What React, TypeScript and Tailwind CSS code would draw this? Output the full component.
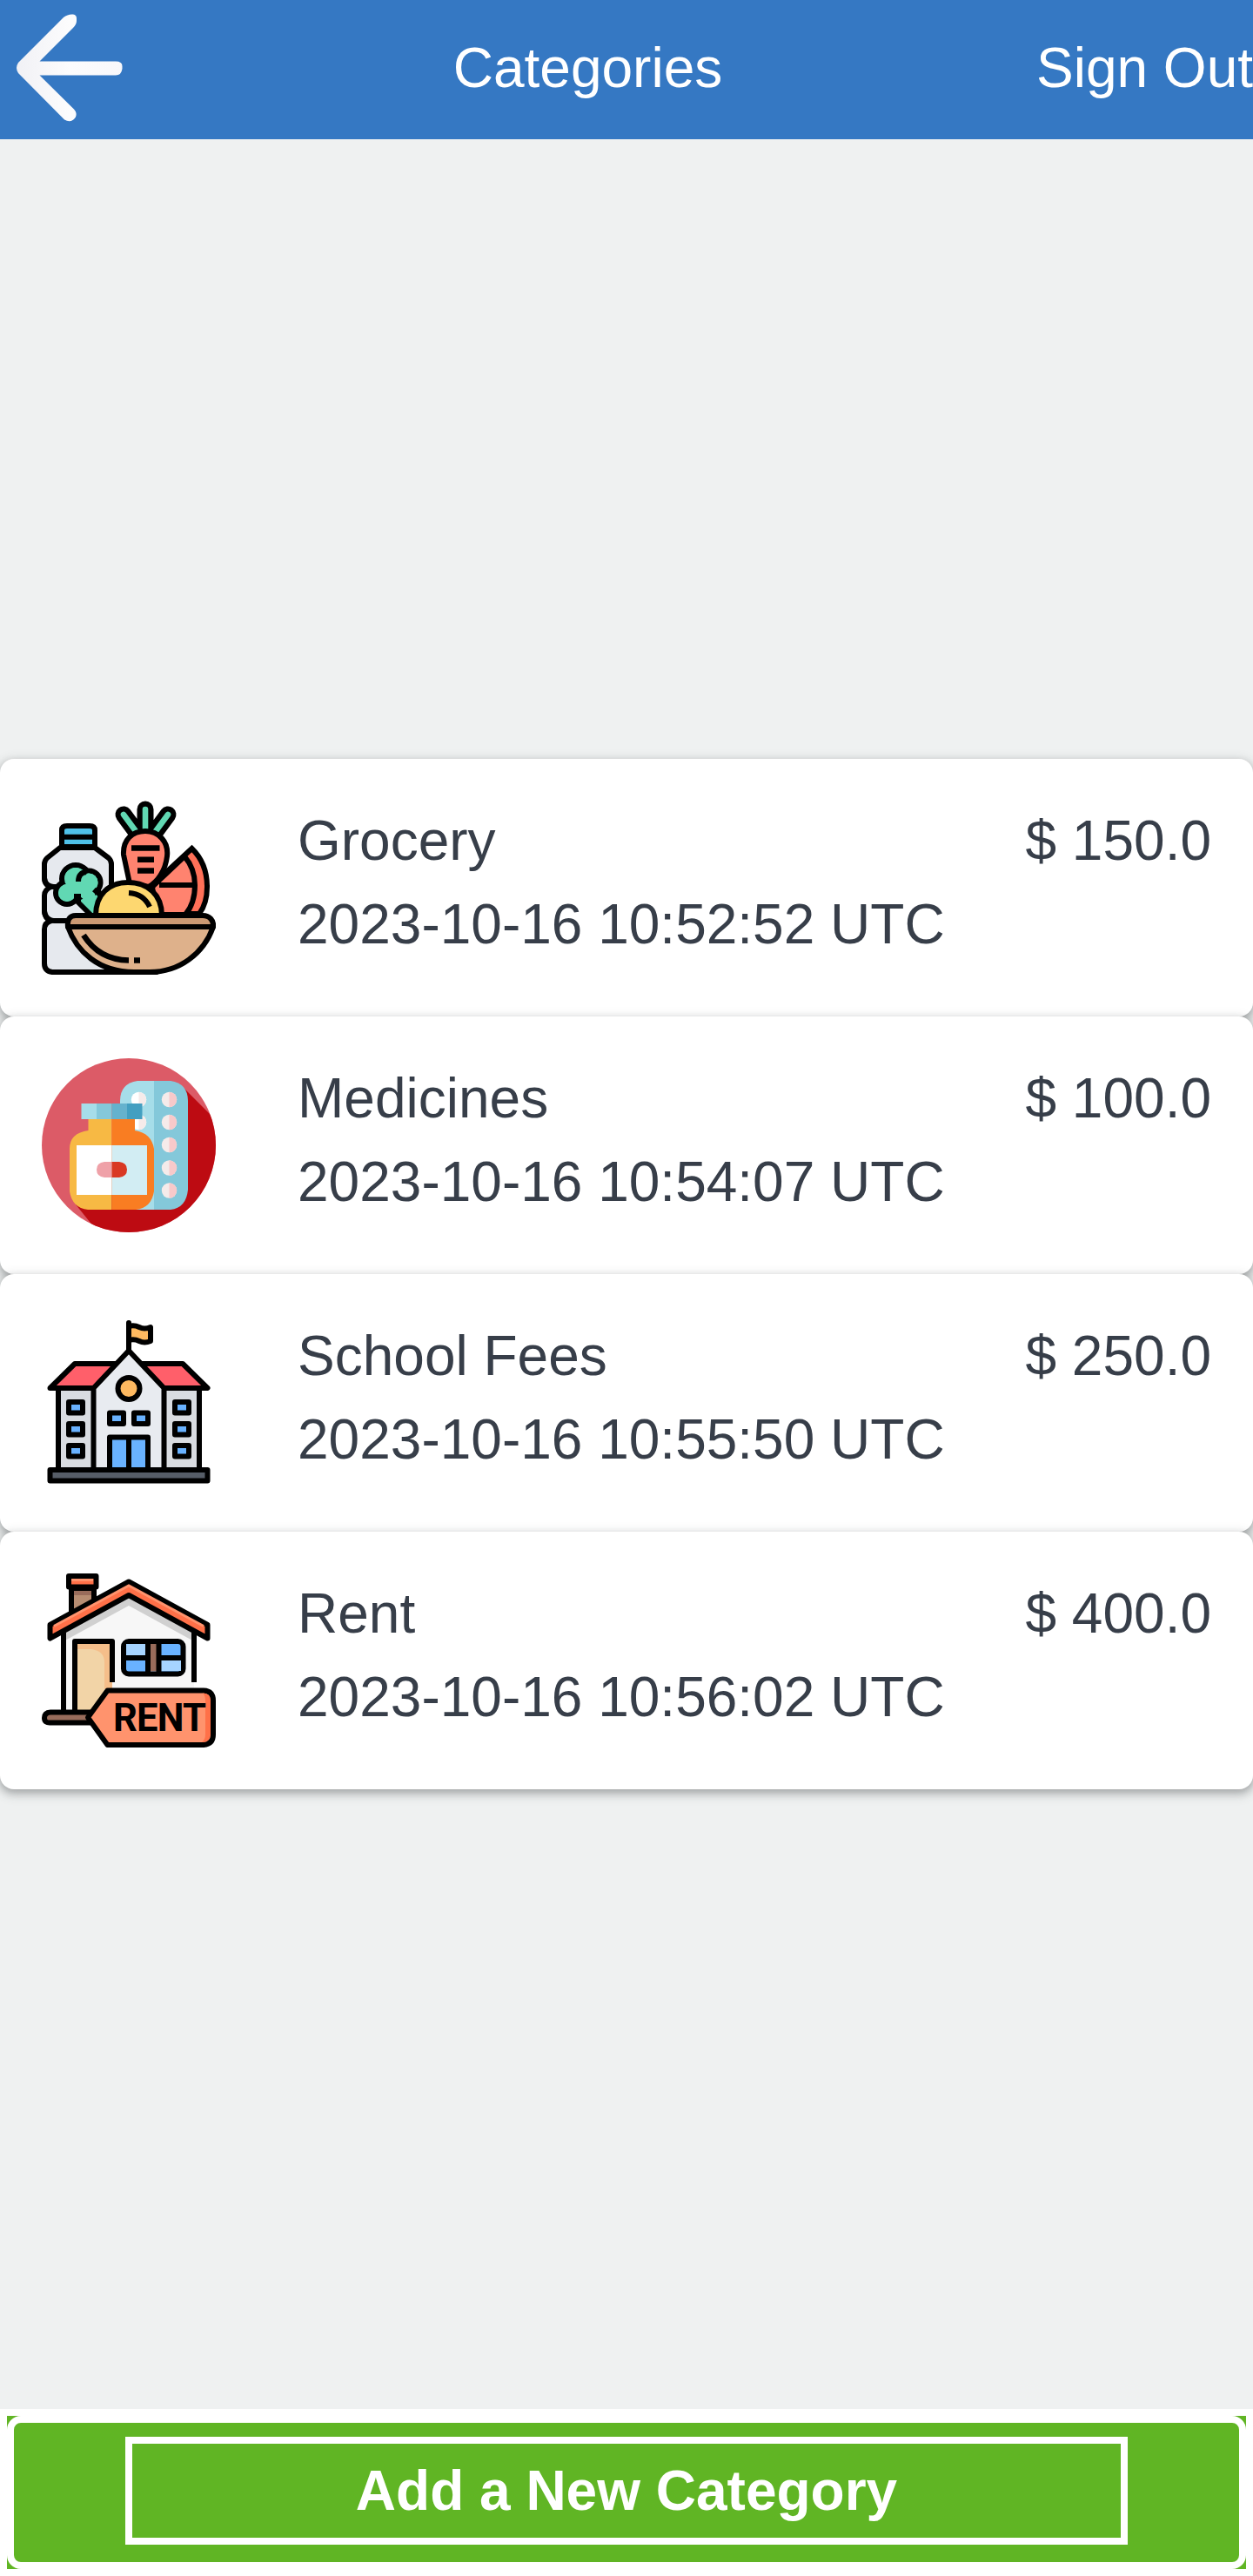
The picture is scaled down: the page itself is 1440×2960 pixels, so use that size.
import React from "react";

const K = "#000";

function BackArrow() {
  return (
    <svg viewBox="0 0 160 160" className="h-[160px] w-[160px] shrink-0">
      <defs>
        <linearGradient id="arrowShade" x1="0" y1="0" x2="1" y2="0">
          <stop offset="0" stopColor="#f1f1f5" />
          <stop offset="0.5" stopColor="#fcfcfd" />
          <stop offset="1" stopColor="#f8f8fb" />
        </linearGradient>
      </defs>
      <path
        d="M21 72L73 20Q78 16 84 16.500Q88 17 88 21V24Q88 28 84 32L45.500 70.500H133Q140.500 70.500 140.500 76V79Q139.500 86.500 133 86.500H45.500L85 125.500Q89 130 87 134.500Q82 142 74 137.500L21 84Q17 78 21 72Z"
        fill="url(#arrowShade)"
      />
    </svg>
  );
}

function GroceryIcon() {
  return (
    <svg viewBox="18 20 200 200" className="h-[200px] w-[200px]">
      <g stroke={K} strokeWidth="6" strokeLinejoin="round">
        <path d="M39 74L24 86Q21 89 21 93V109Q21 117 29 119Q21 122 21 129V147Q21 154 29 158Q21 160 21 168V207Q21 216 30 217H150L98 118V93Q98 89 95 86L79 74Z" fill="#e6e9ee" />
        <path d="M21 109Q22 119 32 119H50M21 147Q22 158 32 158H55" fill="none" />
        <path d="M41 73V54Q41 49 47 49H73Q79 49 79 54V73Z" fill="#4fc1e9" />
        <path d="M41 61.800H79" />
        <path d="M57 134L77 154H90V132L80 121Z" fill="#61d8b3" />
        <circle cx="57" cy="110" r="16" fill="#61d8b3" />
        <circle cx="47" cy="126" r="13" fill="#61d8b3" />
        <circle cx="72" cy="114" r="13.500" fill="#61d8b3" />
      </g>
      <circle cx="57" cy="110" r="13" fill="#61d8b3" />
      <circle cx="47" cy="126" r="10" fill="#61d8b3" />
      <circle cx="72" cy="114" r="10.500" fill="#61d8b3" />
      <path d="M50 118L66 116L78 122L80 132V145L62 130L52 130Z" fill="#61d8b3" />
      <path d="M60 113Q60 103 69 102M55 130H60V138M78 122L86 129" fill="none" stroke={K} strokeWidth="6" />
      <g stroke={K} strokeWidth="6">
        <path d="M145 117L190.500 75Q208 92 208 119Q208 138 199 150H150Z" fill="#ff7058" />
        <path d="M145 119L182 84Q194 98 194 117Q194 138 183 151H150Z" fill="#ff836f" />
        <path d="M153 117H194" />
      </g>
      <path d="M112 36L126 55M163 36L149 55M137 30V55" fill="none" stroke={K} strokeWidth="19" strokeLinecap="round" />
      <path d="M112 36L126 55M163 36L149 55M137 30V55" fill="none" stroke="#61d8b3" strokeWidth="6.600" strokeLinecap="round" />
      <path d="M119 115L112 82C111 65 122 55 137 55C152 55 164 67 162 84C160 101 151 113 141 119Z" fill="#ff836f" stroke={K} strokeWidth="6" />
      <path d="M121 74.500H153.500M128 87.800H147M128 100.500H147" fill="none" stroke={K} strokeWidth="6.500" />
      <path d="M80 152C80 128 95 114 117 114C140 114 156 128 156 152Z" fill="#fdd770" stroke={K} strokeWidth="6" />
      <path d="M118 126Q135 127 142 142" fill="none" stroke={K} strokeWidth="6" />
      <path d="M48 165C47 157 50 152 57 152H203C211 152 216 158 215 165Z" fill="#cb9973" stroke={K} strokeWidth="6" strokeLinejoin="round" />
      <path d="M48 165C58 193 83 217 124 217H142C176 217 204 196 215 165Z" fill="#deb18b" stroke={K} strokeWidth="6" strokeLinejoin="round" />
      <path d="M66 174.500Q84 203 118 203.500M124 203.500H131" fill="none" stroke={K} strokeWidth="6.500" />
    </svg>
  );
}

function MedicineIcon() {
  const rows = [68.5, 94.5, 120.5, 147, 173];
  return (
    <svg viewBox="18 21 200 200" className="h-[200px] w-[200px]">
      <clipPath id="disc"><circle cx="118" cy="121" r="100" /></clipPath>
      <g clipPath="url(#disc)">
        <path d="M18 21H218V221H18Z" fill="#dc5b67" />
        <path d="M182 56L230 104V240H98L57 189Z" fill="#bd0b12" />
      </g>
      <path d="M147 47H128Q108 50 108 70V195H147Z" fill="#a6dde9" />
      <path d="M147 47H166Q186 50 186 70V172Q184 193 166 195H147Z" fill="#84c8da" />
      {rows.map((y) => (
        <g key={y}>
          <circle cx="164.500" cy={y} r="8.700" fill="#f5ebea" />
          <path d={`M164.500 ${y - 8.7}a8.700 8.700 0 0 1 0 17.400Z`} fill="#f7c9ca" />
        </g>
      ))}
      {[68.5, 94.5].map((y) => (
        <g key={y}>
          <circle cx="129.500" cy={y} r="8.700" fill="#fff" />
          <path d={`M129.500 ${y - 8.7}a8.700 8.700 0 0 1 0 17.400Z`} fill="#f5ebea" />
        </g>
      ))}
      <path d="M71.500 90V104Q50 107 50 125V174Q53 193 71 195H98.500V90Z" fill="#f7b944" />
      <path d="M98.500 90H125V104Q144 107 147 125V174Q144 193 126 195H98.500Z" fill="#f97d22" />
      <path d="M63.500 73H81V91H63.500Z" fill="#a6dde9" />
      <path d="M81 73H98.500V91H81Z" fill="#84c8da" />
      <path d="M98.500 73H116V91H98.500Z" fill="#65b2cd" />
      <path d="M116 73H133.500V91H116Z" fill="#439fc1" />
      <path d="M58 121H98.500V178H58Z" fill="#fff" />
      <path d="M98.500 121H139V178H98.500Z" fill="#d2edf3" />
      <path d="M98.500 140H90Q81 141 81 149T90 158H98.500Z" fill="#efa1a8" />
      <path d="M98.500 140H107Q116 141 116 149T107 158H98.500Z" fill="#d93823" />
    </svg>
  );
}

function SchoolIcon() {
  return (
    <svg viewBox="18 18 200 200" className="h-[200px] w-[200px]">
      <g stroke={K} strokeWidth="6" strokeLinejoin="round" strokeLinecap="round">
        <path d="M37 101H199V195H37Z" fill="#d9dce1" />
        <path d="M27.500 101L56 73H180L208.500 101Z" fill="#ff5f6a" />
        <path d="M77.500 195V101L118 58L158.500 101V195Z" fill="#e8ebf0" />
        <path d="M118 58V26" />
        <path d="M118 30Q124 28 130 31T143 31V47Q136 50 130 47T118 46Z" fill="#feb960" />
        <circle cx="118" cy="101.500" r="12.500" fill="#feb960" />
        <path d="M96 195V157.500H140V195Z" fill="#69b2ff" />
        <path d="M118 158V195" />
        <path d="M27.500 195H208.500V207.500H27.500Z" fill="#565d67" />
        {[117, 142, 167].map((y) => (
          <g key={y} fill="#69b2ff">
            <rect x="49" y={y} width="16" height="12.500" />
            <rect x="171" y={y} width="16" height="12.500" />
          </g>
        ))}
        <rect x="96" y="129.500" width="16" height="12.500" fill="#69b2ff" />
        <rect x="124" y="129.500" width="16" height="12.500" fill="#69b2ff" />
      </g>
    </svg>
  );
}

function RentIcon() {
  return (
    <svg viewBox="18 18 200 200" className="h-[200px] w-[200px]">
      <path d="M43 90L118 43L193 90V160L150 180H43Z" fill="#f7f7f7" />
      <path d="M43 86L118 44L193 86V96L118 55L43 96Z" fill="#d0d0d0" />
      <path d="M52 36H78V64L52 79Z" fill="#b78d72" />
      <path d="M52 36H78V43H52Z" fill="#996c5b" />
      <path d="M52 79V35H78V62" fill="none" stroke={K} strokeWidth="6" />
      <path d="M49 21H80.500V33.500H49Z" fill="#ff7048" stroke={K} strokeWidth="6" strokeLinejoin="round" />
      <path d="M52 25.500H77" stroke="#ff936d" strokeWidth="3" />
      <path d="M43 177V86M193 86V143" stroke={K} strokeWidth="6" />
      <path d="M56 177V96H99V151H90V177Z" fill="#f5be8a" />
      <path d="M59 105H75Q90 107 90 120V177H59Z" fill="#f2d4a7" />
      <path d="M56 177V96H99V143" fill="none" stroke={K} strokeWidth="6" strokeLinejoin="round" />
      <path d="M83 177.500H28Q21 178 21 184T28 189.500H83" fill="#996c5b" stroke={K} strokeWidth="6" />
      <path d="M80 180.500H95V189.500H83V186.500H80Z" fill="#996c5b" />
      <path d="M83 177.500H90V180.500H83Z" fill="#996c5b" />
      <path d="M27.500 92.500V77L118 27.500L208.500 77V92.500L118 43Z" fill="#ff7048" stroke={K} strokeWidth="6" strokeLinejoin="round" />
      <path d="M32 78.500L118 32L204 78.500" fill="none" stroke="#ff936d" strokeWidth="3" />
      <rect x="112" y="96" width="68.500" height="37.500" rx="6" fill="#69b2ff" stroke={K} strokeWidth="6" />
      <path d="M115 99H137V113H115ZM155 115H178V130H155Z" fill="#a6d4ff" />
      <path d="M146 99V130.500" stroke="#996c5b" strokeWidth="8" />
      <path d="M140 96V133M152.500 96V133M113 115H143M150 115H180" stroke={K} strokeWidth="6" />
      <path d="M93.500 152.500H204Q215 153 215 164V203Q215 214 204 215H93.500L71 183.500Z" fill="#ff936d" stroke={K} strokeWidth="6" strokeLinejoin="round" />
      <path d="M203 155.500Q212 156 212 164V203Q211 212 202 212Q206 209 206 203V164Q206 158 203 155.500Z" fill="#ff7048" />
      <text
        x="100"
        y="199"
        textLength="107"
        lengthAdjust="spacing"
        className="font-['Roboto',sans-serif] text-[43.500px] font-bold"
        fill={K}
      >
        RENT
      </text>
    </svg>
  );
}

const categories = [
  { name: "Grocery", time: "2023-10-16 10:52:52 UTC", amount: "$ 150.0", Icon: GroceryIcon },
  { name: "Medicines", time: "2023-10-16 10:54:07 UTC", amount: "$ 100.0", Icon: MedicineIcon },
  { name: "School Fees", time: "2023-10-16 10:55:50 UTC", amount: "$ 250.0", Icon: SchoolIcon },
  { name: "Rent", time: "2023-10-16 10:56:02 UTC", amount: "$ 400.0", Icon: RentIcon },
];

export default function App() {
  return (
    <div className="flex h-[2960px] w-[1440px] flex-col overflow-hidden bg-[#eff1f1] font-['Liberation_Sans',Arial,sans-serif] text-[64px] text-[#373e49]">
      <header className="flex h-[160px] shrink-0 items-center justify-between bg-[#3578c3] text-white">
        <BackArrow />
        <h1 className="pb-1 leading-[72px]">Categories</h1>
        <a className="pb-1 leading-[72px]">Sign Out</a>
      </header>
      <main className="flex flex-1 flex-col justify-center">
        {categories.map(({ name, time, amount, Icon }) => (
          <article
            key={name}
            className="flex h-[296px] rounded-[16px] bg-white p-[48px] shadow-[0_4px_8px_0_rgba(60,64,67,0.3),0_4px_12px_4px_rgba(60,64,67,0.15)]"
          >
            <div className="w-[294px] shrink-0">
              <Icon />
            </div>
            <div className="-mt-0.5 flex flex-1 flex-col leading-[96px]">
              <div className="flex justify-between">
                <h2>{name}</h2>
                <p>{amount}</p>
              </div>
              <p>{time}</p>
            </div>
          </article>
        ))}
      </main>
      <footer className="h-[192px] shrink-0 border-8 border-white bg-[#60b524]">
        <div className="flex h-full items-center justify-center rounded-[16px] border-8 border-white">
          <button className="-mt-1 h-[124px] w-[1152px] border-8 border-white font-bold leading-[72px] text-white">
            Add a New Category
          </button>
        </div>
      </footer>
    </div>
  );
}
